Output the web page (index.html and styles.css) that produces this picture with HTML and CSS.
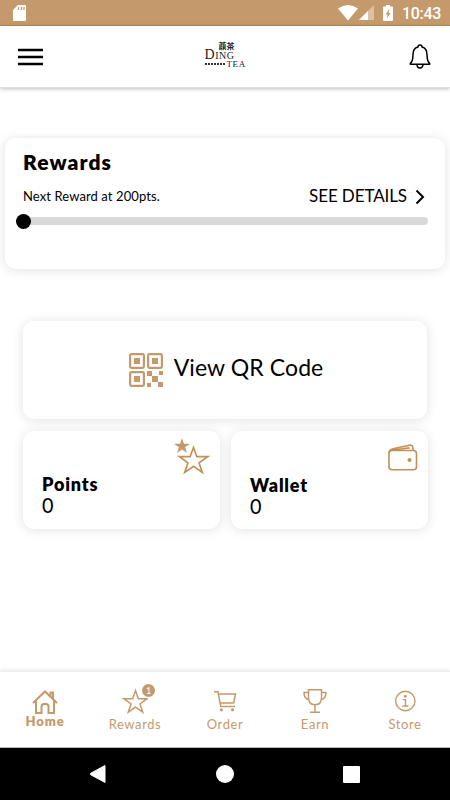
FILE: index.html
```html
<!DOCTYPE html>
<html lang="en">
<head>
  <meta charset="UTF-8" />
  <meta name="viewport" content="width=device-width, initial-scale=1.0"/>
  <title>Ding Tea</title>
  <link rel="stylesheet" href="styles.css">
</head>
<body>

  <div class="status-bar">
    <svg class="sd" width="14" height="16" viewBox="0 0 14 16"><path d="M5 0h7q1 0 1 1v14q0 1-1 1H1q-1 0-1-1V5z" fill="#fff"/><path d="M5.500 2v3M8.500 2v3M11 2v3" stroke="#c49a6c" stroke-width="1.300"/></svg>
    <svg class="wifi" width="20" height="16" viewBox="0 0 20 16"><path d="M0 3.500Q10-3.500 20 3.500L10 15.500z" fill="#fff"/></svg>
    <svg class="signal" width="15" height="15" viewBox="0 0 15 15"><path d="M15 0v15H0z" fill="#fff" opacity=".4"/><path d="M9 6v9H0z" fill="#fff"/></svg>
    <svg class="battery" width="10" height="16" viewBox="0 0 10 16"><path d="M3 0h4v1.500h2q1 0 1 1V15q0 1-1 1H1q-1 0-1-1V2.500q0-1 1-1h2z" fill="#fff"/><path d="M6 4 2.500 9.500h2L4 13.500 7.500 8h-2z" fill="#c49a6c"/></svg>
    <span class="time">10:43</span>
  </div>

  <header class="header">
    <button class="icon-btn" aria-label="Menu">
      <svg width="25" height="18" viewBox="0 0 25 18"><path d="M0 2h25M0 9h25M0 16h25" stroke="#000" stroke-width="2.600"/></svg>
    </button>
    <div class="logo">
      <span class="logo-cn">薡茶</span>
      <span class="logo-ding"><b>D</b>ING</span>
      <span class="logo-bottom"><i class="logo-dots"></i>TEA</span>
    </div>
    <button class="icon-btn" aria-label="Notifications">
      <svg width="22" height="26" viewBox="0 0 22 26" fill="none" stroke="#000" stroke-width="1.500" stroke-linejoin="round"><path d="M9 3a2 2 0 0 1 4 0c3.700 1 5 4 5 7.500 0 5 .8 7.500 2.700 8.800v1H1.300v-1C3.200 18 4 15.500 4 10.500 4 7 5.300 4 9 3z"/><path d="M8 20.500a3 3.500 0 0 0 6 0"/></svg>
    </button>
  </header>

  <main class="content">
    <section class="card rewards">
      <h1>Rewards</h1>
      <div class="rewards-row">
        <span class="next">Next Reward at 200pts.</span>
        <a class="details">SEE DETAILS</a>
        <svg class="chevron" width="10" height="16" viewBox="0 0 10 16"><path d="M1.500 1.500 8 8l-6.500 6.500" fill="none" stroke="#000" stroke-width="2"/></svg>
      </div>
      <div class="progress"><span class="dot"></span></div>
    </section>

    <section class="card qr">
      <svg width="34" height="34" viewBox="0 0 34 34" fill="#c49a6c">
        <g fill="none" stroke="#c49a6c" stroke-width="2.200"><rect x="1.100" y="1.100" width="13.800" height="13.800" rx="1.300"/><rect x="19.100" y="1.100" width="13.800" height="13.800" rx="1.300"/><rect x="1.100" y="19.100" width="13.800" height="13.800" rx="1.300"/></g>
        <path d="M5 5h6v6H5zM23 5h6v6h-6zM5 23h6v6H5zM18 18h5v5h-5zM30 18h4v4h-4zM23 23h6v6h-6zM18 30h4v4h-4zM29 29h5v5h-5z"/>
      </svg>
      <span class="qr-text">View QR Code</span>
    </section>

    <div class="tiles">
      <section class="card tile">
        <svg class="stars" width="36" height="36" viewBox="0 0 36 36"><path d="m8 0 1.900 5.700h6.100l-4.900 3.600 1.900 5.700-5-3.500L3 15l1.900-5.700L0 5.700h6.100z" fill="#c49a6c"/><path d="m19.500 9.500 3.400 9.200h10.600l-8.400 6.200 3.200 9.500-8.800-6-8.800 6 3.200-9.500-8.400-6.200h10.600z" fill="none" stroke="#c49056" stroke-width="1.700"/></svg>
        <h2>Points</h2>
        <p>0</p>
      </section>
      <section class="card tile wallet">
        <svg class="purse" width="30" height="27" viewBox="0 0 30 27" fill="none" stroke="#c49056" stroke-width="1.600"><path d="M1 9.500q0-4 4-4.700L21.500 1.200q3-.5 3.300 2.500l.5 2.800M4 6.300l17.500-2.400"/><rect x="1" y="6.500" width="27.500" height="19.300" rx="3"/><circle cx="21.500" cy="16" r="2" fill="#c49056" stroke="none"/></svg>
        <h2>Wallet</h2>
        <p>0</p>
      </section>
    </div>
  </main>

  <nav class="tabs">
    <a class="tab active">
      <svg width="26" height="26" viewBox="0 0 26 26" fill="none" stroke="#c49a6c" stroke-width="2"><path d="M1 15 13 3.500 25 15M18.500 8V4.500H21V10.500"/><path d="M4 13v12h5.500v-6.500q0-2.500 2.500-2.500h2q2.500 0 2.500 2.500V25H22V13"/></svg>
      <span>Home</span>
    </a>
    <a class="tab">
      <svg width="26" height="26" viewBox="0 0 26 26" fill="none" stroke="#c49a6c" stroke-width="1.500"><path d="m13.500 2.500 2.800 8.200H25l-7 5.300 2.700 8.200-7.200-5-7.200 5L9 16l-7-5.300h8.700z"/></svg>
      <em class="badge">1</em>
      <span>Rewards</span>
    </a>
    <a class="tab">
      <svg width="26" height="26" viewBox="0 0 26 26" fill="none" stroke="#c49a6c" stroke-width="1.500"><path d="M2 3.800h4l2.700 14.700H23M6.500 6h17l-1.800 9H8"/><circle cx="9.300" cy="21.800" r="1.600" fill="#c49a6c" stroke="none"/><circle cx="20.500" cy="21.800" r="1.600" fill="#c49a6c" stroke="none"/></svg>
      <span>Order</span>
    </a>
    <a class="tab">
      <svg width="26" height="26" viewBox="0 0 26 26" fill="none" stroke="#c49a6c" stroke-width="1.500"><path d="M6.500 1.700h13v8q0 7-6.500 7t-6.500-7zM6.500 4.500H2q0 6.500 5.500 7.500M19.500 4.500H24q0 6.500-5.500 7.500M13 16.500V24M8 24.200h10"/></svg>
      <span>Earn</span>
    </a>
    <a class="tab">
      <svg width="26" height="26" viewBox="0 0 26 26" fill="none" stroke="#c49a6c" stroke-width="1.400"><circle cx="13.300" cy="13" r="9.700"/><path d="M10.800 11.600h2.700v6M10.300 18h6.200"/><circle cx="13.300" cy="8.300" r="1.400" fill="#c49a6c" stroke="none"/></svg>
      <span>Store</span>
    </a>
  </nav>

  <div class="system-nav">
    <svg width="16" height="18" viewBox="0 0 16 18"><path d="M15 .5v17L.8 9.800q-1-.8 0-1.600z" fill="#fff" stroke="#fff"/></svg>
    <span class="circle"></span>
    <span class="square"></span>
  </div>

</body>
</html>
```

FILE: styles.css
```css
* {
  box-sizing: border-box;
}

body {
  margin: 0;
  height: 800px;
  display: flex;
  flex-direction: column;
  font-family: Lato, "Open Sans", sans-serif;
  color: #000;
  background: #fff;
  overflow: hidden;
}

h1, h2, p {
  margin: 0;
}

.status-bar {
  height: 26px;
  flex: none;
  display: flex;
  align-items: center;
  padding: 0 9px 0 13px;
  background: #c49a6c;
  border-bottom: 1px solid #bd8c50;
}

.sd { margin-right: auto; }
.wifi { margin-right: 1px; }
.signal { margin-right: 9px; }
.battery { margin-right: 9px; }

.time {
  font: 500 16px/20px Roboto, sans-serif;
  color: #fff;
  width: 39px;
  white-space: nowrap;
  letter-spacing: -0.3px;
  padding-top: 2px;
}

.header {
  height: 62px;
  flex: none;
  display: flex;
  align-items: center;
  justify-content: space-between;
  padding: 0 19px 0 18px;
  border-bottom: 1px solid #ddd;
  box-shadow: 0 1px 4px rgba(0, 0, 0, 0.25);
}

.icon-btn {
  display: flex;
  padding: 0;
  border: none;
  background: none;
}

.logo {
  display: flex;
  flex-direction: column;
  width: 43px;
  height: 25px;
  margin-top: -5px;
  font-family: "Liberation Serif", serif;
  color: #222;
}

.logo-cn {
  font: 700 8px/8px "Noto Sans CJK TC", sans-serif;
  padding-left: 14px;
}

.logo-ding {
  font-size: 10px;
  line-height: 9px;
  letter-spacing: 0.5px;
}

.logo-ding b {
  font-size: 14px;
  font-weight: normal;
}

.logo-bottom {
  display: flex;
  align-items: center;
  gap: 2px;
  font-size: 9px;
  line-height: 8px;
  letter-spacing: 0.6px;
}

.logo-dots {
  width: 20px;
  height: 2px;
  background: repeating-linear-gradient(90deg, #333 0 2px, #fff 2px 3px);
}

.content {
  flex: 1;
  padding: 50px 5px 0;
}

.card {
  background: #fff;
  border-radius: 11px;
  box-shadow: 0 1px 12px rgba(0, 0, 0, 0.12);
}

.rewards {
  height: 131px;
  padding: 11px 17px 0 18px;
}

.rewards h1 {
  font-size: 21px;
  line-height: 26px;
  font-weight: 800;
  letter-spacing: 1.1px;
}

.rewards-row {
  display: flex;
  align-items: center;
  height: 28px;
  margin-top: 7px;
}

.next {
  font-size: 13px;
  letter-spacing: 0.1px;
  margin-right: auto;
}

.details {
  font-size: 17px;
  letter-spacing: -0.1px;
  margin-top: -2px;
}

.chevron {
  margin: 1px 3px 0 8px;
}

.progress {
  height: 8px;
  margin-top: 7px;
  display: flex;
  align-items: center;
  border-radius: 4px;
  background: #d9d9d9;
}

.dot {
  width: 15px;
  height: 15px;
  margin-left: -7.5px;
  border-radius: 50%;
  background: #000;
}

.qr {
  height: 98px;
  margin: 52px 18px 12px;
  display: flex;
  align-items: center;
  justify-content: center;
  gap: 11px;
  padding-left: 2px;
}

.qr-text {
  font-size: 23px;
  letter-spacing: 0.1px;
  margin-top: -7px;
}

.tiles {
  display: grid;
  grid-template-columns: 197px 197px;
  gap: 11px;
  margin: 0 18px;
}

.tile {
  position: relative;
  height: 98px;
  padding: 42px 19px 0;
}

.wallet {
  padding-top: 43px;
}

.tile h2 {
  font-size: 18px;
  line-height: 22px;
  font-weight: 800;
  letter-spacing: 0.8px;
}

/* the balance digits are narrower than the headings */
.tile p {
  font-size: 22px;
  line-height: 20px;
  transform: scaleX(0.9);
  transform-origin: left;
}

.stars {
  position: absolute;
  top: 7px;
  right: 10px;
}

.purse {
  position: absolute;
  top: 13px;
  right: 10px;
}

.tabs {
  height: 77px;
  flex: none;
  display: grid;
  grid-template-columns: repeat(5, 1fr);
  border-top: 1px solid #eee;
  border-bottom: 1px solid #bbb;
  box-shadow: 0 -1px 4px rgba(0, 0, 0, 0.1);
}

.tab {
  position: relative;
  display: flex;
  flex-direction: column;
  align-items: center;
  padding-top: 16px;
  color: #c49a6c;
}

.tab span {
  font-size: 13px;
  line-height: 16px;
  letter-spacing: 0.6px;
  margin-top: 2px;
}

.active span {
  font-weight: 800;
  letter-spacing: 0.9px;
  margin-top: -1px;
}

.badge {
  position: absolute;
  top: 12px;
  left: 52px;
  width: 13px;
  height: 13px;
  border-radius: 50%;
  background: #c49a6c;
  color: #fff;
  font: 9px/13px Lato, sans-serif;
  text-align: center;
}

.system-nav {
  height: 52px;
  flex: none;
  display: flex;
  align-items: center;
  justify-content: space-between;
  padding: 0 90px;
  background: #000;
}

.circle {
  width: 18px;
  height: 18px;
  border-radius: 50%;
  background: #fff;
}

.square {
  width: 17px;
  height: 17px;
  border-radius: 1px;
  background: #fff;
}
```
